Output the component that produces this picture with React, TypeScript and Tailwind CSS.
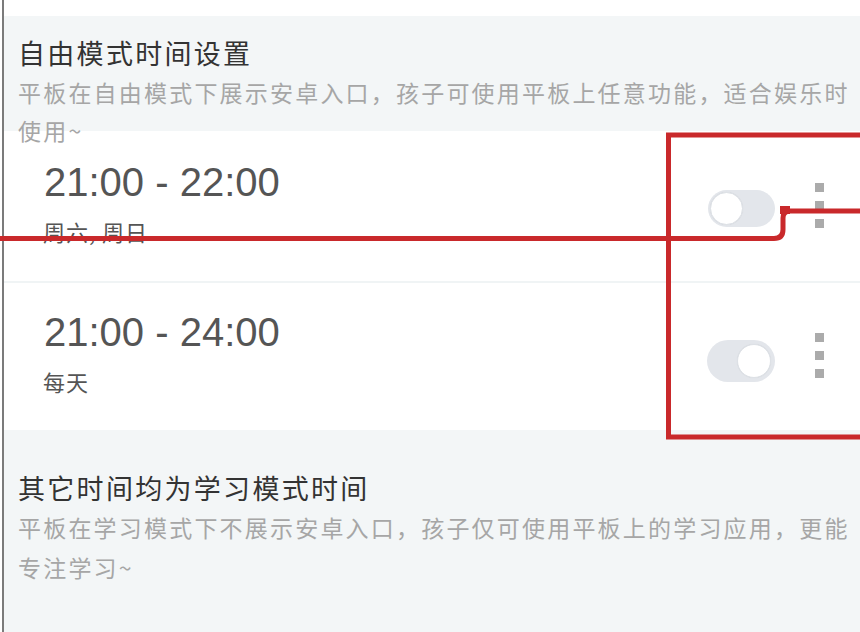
import React from "react";

const cjk = { fontFamily: '"Noto Sans CJK SC", "Noto Sans", sans-serif' };

function Toggle({ on, w, h, pad }: { on: boolean; w: number; h: number; pad: number }) {
  const d = h - pad * 2;
  return (
    <div
      className={`flex items-center rounded-full bg-[#e3e6eb] ${on ? "justify-end" : "justify-start"}`}
      style={{ width: w, height: h, padding: pad }}
    >
      <div
        className="rounded-full bg-white border border-[#dde1e6] shadow-[0_0_1px_rgba(0,0,0,0.08)]"
        style={{ width: d, height: d }}
      />
    </div>
  );
}

function Dots() {
  return (
    <div className="flex flex-col gap-[9px]">
      <div className="w-[9px] h-[9px] bg-[#ababab]" />
      <div className="w-[9px] h-[9px] bg-[#ababab]" />
      <div className="w-[9px] h-[9px] bg-[#ababab]" />
    </div>
  );
}

function Row({
  time,
  sub,
  h,
  pt,
  on,
  toggleTop,
  dotsTop,
  tw,
  th,
  tp,
}: {
  time: string;
  sub: string;
  h: number;
  pt: number;
  on: boolean;
  toggleTop: number;
  dotsTop: number;
  tw: number;
  th: number;
  tp: number;
}) {
  return (
    <div className="flex items-start bg-white pl-[40px] pr-[36px]" style={{ height: h }}>
      <div className="flex flex-col" style={{ paddingTop: pt }}>
        <div
          className="text-[40px] leading-[40px] text-[#555555]"
          style={{ fontFamily: '"Liberation Sans", Arial, sans-serif' }}
        >
          {time}
        </div>
        <div className="mt-[14px] -ml-[1px] text-[22px] leading-[30px] tracking-[1px] text-[#555555] whitespace-pre" style={cjk}>
          {sub}
        </div>
      </div>
      <div className="ml-auto flex items-start gap-[40px]">
        <div style={{ marginTop: toggleTop }}>
          <Toggle on={on} w={tw} h={th} pad={tp} />
        </div>
        <div style={{ marginTop: dotsTop }}>
          <Dots />
        </div>
      </div>
    </div>
  );
}

export default function App() {
  return (
    <div className="relative w-[860px] h-[632px] overflow-hidden bg-white pl-[2px]" style={cjk}>
      <div className="h-full flex flex-col border-l-2 border-[#7b7b7b]">
        <div className="h-4 bg-white shrink-0" />
        <div className="relative z-10 h-[115px] shrink-0 bg-[#f3f6f7] pl-[14px] pt-[20px]">
          <div className="text-[27px] leading-[34px] tracking-[2.3px] text-[#333333]">自由模式时间设置</div>
          <div className="mt-[3px] text-[23px] leading-[38px] tracking-[2.2px] text-[#a6a6a6] whitespace-nowrap">
            平板在自由模式下展示安卓入口，孩子可使用平板上任意功能，适合娱乐时
            <br />
            使用~
          </div>
        </div>
        <Row
          time="21:00 - 22:00"
          sub="周六, 周日"
          h={150}
          pt={31}
          on={false}
          toggleTop={59}
          dotsTop={52}
          tw={67}
          th={37}
          tp={2}
        />
        <div className="h-[2px] shrink-0 bg-[#f0f4f5]" />
        <Row
          time="21:00 - 24:00"
          sub="每天"
          h={147}
          pt={29}
          on={true}
          toggleTop={57}
          dotsTop={50}
          tw={68}
          th={42}
          tp={4}
        />
        <div className="flex-1 bg-[#f3f6f7] pl-[14px] pt-[41px]">
          <div className="text-[27px] leading-[34px] tracking-[2.3px] text-[#333333]">其它时间均为学习模式时间</div>
          <div className="mt-[2px] text-[23px] leading-[40px] tracking-[2.2px] text-[#a6a6a6] whitespace-nowrap">
            平板在学习模式下不展示安卓入口，孩子仅可使用平板上的学习应用，更能
            <br />
            专注学习~
          </div>
        </div>
      </div>
      <svg
        className="absolute inset-0 pointer-events-none z-20"
        width="860"
        height="632"
        viewBox="0 0 860 632"
      >
        <rect x="668.5" y="135" width="200" height="302" fill="none" stroke="#c9292b" strokeWidth="5" />
        <path
          d="M0 238.5 H774 Q783 238.5 783 229.5 V218 Q783 211 790 211 H860"
          fill="none"
          stroke="#c9292b"
          strokeWidth="5"
        />
        <rect x="780" y="206" width="10" height="8" fill="#c9292b" />
      </svg>
    </div>
  );
}
